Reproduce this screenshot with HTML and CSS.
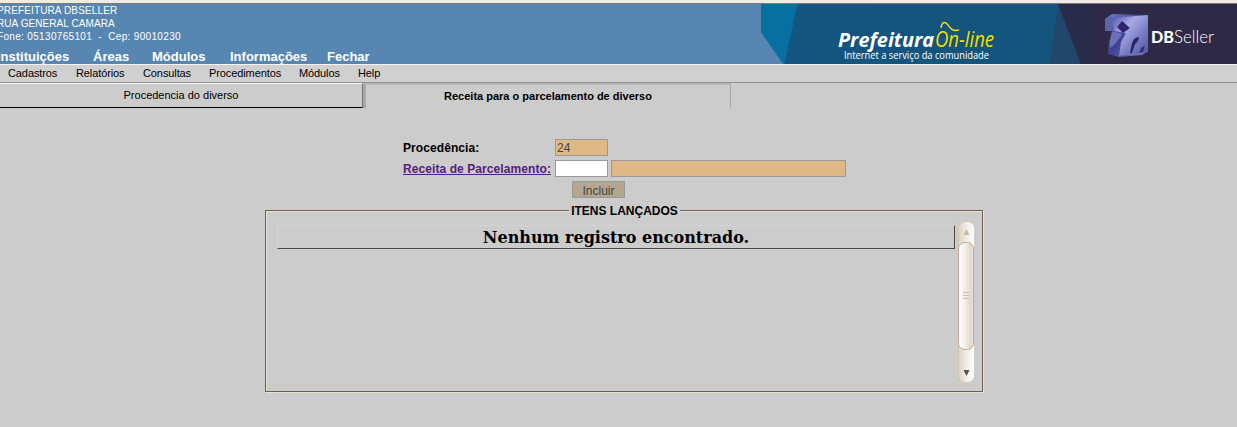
FILE: index.html
```html
<!DOCTYPE html>
<html lang="pt-BR">
<head>
<meta charset="utf-8">
<title>Prefeitura On-line</title>
<link rel="stylesheet" href="styles.css">
</head>
<body>
<header class="header">
  <div class="header-left">
    <address class="address">
      <div class="l1">PREFEITURA DBSELLER</div>
      <div class="l2">RUA GENERAL CAMARA</div>
      <div class="l3">Fone: 05130765101 &nbsp;- &nbsp;Cep: 90010230</div>
    </address>
    <nav class="main-menu"><a>Instituições</a><a>Áreas</a><a>Módulos</a><a>Informações</a><a>Fechar</a></nav>
  </div>
  <svg class="banner" width="476" height="60" viewBox="761 4 476 60">
    <defs>
      <linearGradient id="teal" x1="0" x2="1"><stop offset="0" stop-color="#135680"/><stop offset="1" stop-color="#14527a"/></linearGradient>
      <linearGradient id="cube" x1="0" y1="0" x2="1" y2="1"><stop offset="0" stop-color="#4b4fa4"/><stop offset=".35" stop-color="#a9abe6"/><stop offset=".65" stop-color="#777bc4"/><stop offset="1" stop-color="#5257a6"/></linearGradient>
      <linearGradient id="side" x1="0" y1="0" x2="1" y2="1"><stop offset="0" stop-color="#7479cc"/><stop offset=".5" stop-color="#3e4294"/><stop offset="1" stop-color="#8185cc"/></linearGradient>
      <filter id="soft"><feGaussianBlur stdDeviation=".6"/></filter>
    </defs>
    <path d="M761 4H1237V64H784L761 32Z" fill="url(#teal)"/>
    <path d="M761 4H797.500L784.500 64H783L761 32Z" fill="#0870a0"/>
    <path d="M1058 4H1237V64H1080Z" fill="#2e2947"/>
    <path d="M1058 4H1091V64H1080Z" fill="#292b4a"/>
    <path d="M1058 4L1081 64H1050Z" fill="#23466b"/>
    <g filter="url(#soft)">
      <path d="M1105 19L1112 14L1147 15L1148 51L1142 55L1119 57L1108 54L1109 41L1115 31L1105 31Z" fill="url(#side)"/>
      <path d="M1112 18L1148 15V52L1119 56L1121 42L1126 33L1114 31Z" fill="url(#cube)"/>
      <path d="M1122 21L1130 28L1123 33L1117 27Z" fill="#2e2775"/>
      <path d="M1130 53L1132 43Q1134 37 1139 37Q1139 41 1135 44L1132 53Z" fill="#292866"/>
      <path d="M1139 53L1142 47L1145 46L1143 52Z" fill="#303170"/>
      <path d="M1105 19L1112 17V31H1105Z" fill="#5e65ac"/>
      <path d="M1112 31L1122 34L1116 43L1110 48L1110 40Z" fill="#6a70ba"/>
    </g>
    <text x="838" y="47" class="brand" textLength="96" lengthAdjust="spacingAndGlyphs">Prefeitura</text>
    <text x="935" y="47" class="online" textLength="59" lengthAdjust="spacingAndGlyphs">On-line</text>
    <path d="M941 28Q942 21 946 23C950 26 950 32 959 30" fill="none" stroke="#f5df00" stroke-width="1.500"/>
    <text x="844" y="58.500" class="tagline" textLength="145" lengthAdjust="spacingAndGlyphs">Internet a serviço da comunidade</text>
    <text x="1151" y="43" class="db" textLength="23" lengthAdjust="spacingAndGlyphs">DB</text>
    <text x="1174" y="43" class="seller" textLength="40" lengthAdjust="spacingAndGlyphs">Seller</text>
  </svg>
</header>
<nav class="sub-menu"><a>Cadastros</a><a>Relatórios</a><a>Consultas</a><a>Procedimentos</a><a>Módulos</a><a>Help</a></nav>
<div class="tabs">
  <div class="tab">Procedencia do diverso</div>
  <div class="tab tab-active">Receita para o parcelamento de diverso</div>
</div>
<main>
  <div class="form">
    <div class="row"><label class="proc">Procedência:</label><span class="field filled">24</span></div>
    <div class="row"><a class="link">Receita de Parcelamento:</a><span class="field"></span><span class="field filled wide"></span></div>
  </div>
  <div class="button">Incluir</div>
  <section class="panel">
    <h2 class="legend">ITENS LANÇADOS</h2>
    <div class="list">
      <div class="empty">Nenhum registro encontrado.</div>
      <svg class="scrollbar" width="16" height="160" viewBox="0 0 16 160">
        <defs>
          <linearGradient id="track" x1="0" x2="1"><stop offset="0" stop-color="#dfd4c4"/><stop offset=".55" stop-color="#f3eee8"/><stop offset="1" stop-color="#fff"/></linearGradient>
          <linearGradient id="thumb" x1="0" x2="1"><stop offset="0" stop-color="#fff"/><stop offset=".45" stop-color="#f3eee8"/><stop offset=".85" stop-color="#e0d6c8"/><stop offset="1" stop-color="#f4eee5"/></linearGradient>
        </defs>
        <path d="M0 0H16V160H0Z" fill="#d2c7b0"/>
        <rect x="1" width="15" height="160" rx="6" fill="url(#track)"/>
        <rect x=".5" y="20.500" width="15" height="107" rx="6" fill="url(#thumb)" stroke="#b9aa8c"/>
        <path d="M5 70.500H11M5 73.500H11M5 76.500H11" stroke="#c9bfa9"/>
        <path d="M8.500 7L11.500 13H5.500Z" fill="#c5baa0"/>
        <path d="M5.500 148H11.500L8.500 154Z" fill="#555248"/>
      </svg>
    </div>
  </section>
</main>
</body>
</html>
```
FILE: styles.css
```css
* { box-sizing: border-box; }
body {
  margin: 0;
  height: 427px;
  overflow: hidden;
  background: #ccc;
  color: #000;
  font-family: "Liberation Sans", Arial, sans-serif;
}
.header {
  display: flex;
  justify-content: space-between;
  height: 65px;
  border-top: 3px solid #efebe7;
  border-bottom: 1px solid #f4f4f4;
  background: #5786b2;
  box-shadow: inset 0 1px #85796c;
}
.banner { display: block; margin-top: 1px; }
.header-left { margin-left: -3px; color: #fff; white-space: nowrap; }
.address { font: 10px/13px "Liberation Sans", Arial, sans-serif; padding-top: 1px; }
.l1 { letter-spacing: .13px; }
.l2 { letter-spacing: .08px; }
.l3 { letter-spacing: .33px; }
.main-menu {
  display: grid;
  grid-template-columns: 96px 59px 78px 97px auto;
  font-weight: bold;
  font-size: 13px;
  line-height: 15px;
  padding-top: 6px;
}
.sub-menu {
  display: grid;
  grid-template-columns: 68px 67px 66px 90px 59px auto;
  height: 18px;
  padding-left: 8px;
  border-bottom: 1px solid #909090;
  background: #d0d0d0;
  font-size: 11px;
  letter-spacing: -.1px;
  line-height: 17px;
}
.tabs { display: flex; height: 25px; }
.tab {
  width: 363px;
  border-top: 1px solid #f4f4f4;
  border-right: 1px solid #777;
  border-bottom: 1px solid #000;
  text-align: center;
  font-size: 11px;
  line-height: 23px;
}
.tab-active {
  width: 368px;
  border-top: 2px solid #b8b8b8;
  border-right: 1px solid #a8a8a8;
  border-bottom: 0;
  border-left: 3px solid #a8a8a8;
  font-weight: bold;
}
.form {
  display: flex;
  flex-direction: column;
  gap: 4px;
  padding: 31px 0 0 403px;
}
.row {
  display: grid;
  grid-template-columns: 149px 53px 235px;
  column-gap: 3px;
  height: 17px;
  font-size: 12px;
  line-height: 19px;
  font-weight: bold;
  white-space: nowrap;
}
.row > * { height: 17px; }
.proc, .link { letter-spacing: .08px; }
.link { color: #551a8b; text-decoration: underline; }
.field {
  border: 1px solid #999;
  background: #fff;
  color: #444;
  font-weight: normal;
  line-height: 16px;
  padding-left: 1px;
}
.filled { background: #deb887; }
.button {
  width: 53px;
  height: 17px;
  margin: 4px 0 0 572px;
  border: 1px solid #999;
  background: #b5a68f;
  color: #444;
  text-align: center;
  font-size: 12px;
  line-height: 18px;
}
.panel {
  width: 718px;
  height: 182px;
  margin: 12px 0 0 265px;
  border: 1px solid #6f5f50;
  box-shadow: 1px 1px #e8dfd5, inset 1px 1px #e8dfd5;
}
.legend {
  width: 111px;
  margin: -7px 0 0 303px;
  background: #ccc;
  text-align: center;
  font-size: 12px;
  line-height: 14px;
  white-space: nowrap;
}
.list {
  display: flex;
  justify-content: space-between;
  align-items: flex-start;
  padding: 4px 8px 0 11px;
}
.empty {
  width: 678px;
  height: 24px;
  margin-top: 3px;
  border: 1px solid #d4d4d4;
  border-right-color: #484848;
  border-bottom-color: #484848;
  text-align: center;
  font: bold 16px/24px "DejaVu Serif", serif;
}
.scrollbar { display: block; }
.brand, .online, .tagline { font-family: "Open Sans", "Noto Sans", sans-serif; }
.brand { font-size: 20px; font-weight: 700; font-style: italic; fill: #fff; }
.online { font-size: 21px; font-style: italic; fill: #f5df00; }
.tagline { font-size: 10px; fill: #fff; }
.db, .seller { font-family: Lato, sans-serif; font-size: 17px; fill: #fff; }
.db { font-weight: 900; }
.seller { font-weight: 300; }
```
